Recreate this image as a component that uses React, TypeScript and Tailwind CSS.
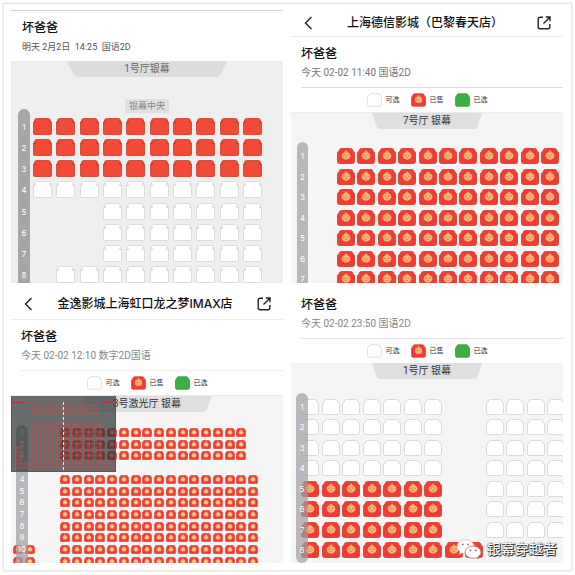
import React from "react";

type Kind = "plain" | "face" | "mini";

const SIZES: Record<Kind, string> = {
  plain: "h-[17px] w-[19px]",
  face: "h-4 w-[18px]",
  mini: "h-[9px] w-[10px]",
};

function SeatArt({ kind, state }: { kind: Kind; state: "sold" | "free" | "picked" }) {
  if (kind === "plain") {
    const sold = state === "sold";
    return (
      <svg viewBox="0 0 19 17" className="block h-full w-full" aria-hidden="true">
        <path
          d="M3.500.5h12q1.200 0 1.600 1l.5 1.700.9.800v11.500q0 1-1 1h-16q-1 0-1-1v-11.500l.9-.8.5-1.700q.4-1 1.600-1z"
          fill={sold ? "#f34a38" : "#ffffff"}
          stroke={sold ? "#d0503f" : "#dcdcdc"}
          strokeWidth="1"
        />
        <path
          d="M.8 4.500h1.400v-2M18.200 4.500h-1.400v-2"
          fill="none"
          stroke={sold ? "#a8392c" : "#c8c8c8"}
          strokeWidth=".8"
        />
      </svg>
    );
  }
  const body =
    "M4.500.5h9q1.800 0 2.200 1.600l.3 1.200q1.500.3 1.500 1.900v8.300q0 2-2 2h-13q-2 0-2-2v-8.300q0-1.600 1.500-1.900l.3-1.200Q2.700.5 4.500.5z";
  if (state !== "sold") {
    const picked = state === "picked";
    return (
      <svg viewBox="0 0 18 16" className="block h-full w-full" aria-hidden="true">
        <path d={body} fill={picked ? "#3bb044" : "#fff"} stroke={picked ? "#379f3f" : "#dadadd"} strokeWidth="1" />
      </svg>
    );
  }
  return (
    <svg viewBox="0 0 18 16" className="block h-full w-full" aria-hidden="true">
      <path d={body} fill="#f03c34" stroke="#e0483e" strokeWidth="1" />
      <circle cx="9" cy="3.900" r="1.500" fill="#f8a468" />
      <ellipse cx="9" cy="7.800" rx="4.400" ry="3.900" fill="#fbb577" />
      {kind === "mini" ? (
        <circle cx="9" cy="7.800" r="1.700" fill="#fbe0b8" />
      ) : (
        <path
          d="M6 7.200h2.300M9.700 7.200h2.300M7.800 9.300q1.200.6 2.400 0"
          fill="none"
          stroke="#d9784a"
          strokeWidth=".8"
        />
      )}
    </svg>
  );
}

/* Row strings: x = sold, o = free, . = aisle */
function Seats({ rows, kind, className }: { rows: string[]; kind: Kind; className: string }) {
  return (
    <div className={`flex shrink-0 flex-col justify-between ${className}`}>
      {rows.map((row, r) => (
        <div key={r} className="flex justify-between">
          {row.split("").map((c, i) =>
            c === "." ? (
              <span key={i} className={SIZES[kind]} />
            ) : (
              <button key={i} type="button" disabled={c === "x"} aria-label={`${r + 1}排${i + 1}座`} className={SIZES[kind]}>
                <SeatArt kind={kind} state={c === "x" ? "sold" : "free"} />
              </button>
            )
          )}
        </div>
      ))}
    </div>
  );
}

function RowBar({ labels, className, cell }: { labels: string[]; className: string; cell: string }) {
  return (
    <div className={`absolute flex flex-col text-center text-[8px] text-white ${className}`}>
      <div className={`flex shrink-0 flex-col justify-between ${cell}`}>
        {labels.map((l, i) => (
          <span key={i} className="block">
            {l || "\u00a0"}
          </span>
        ))}
      </div>
    </div>
  );
}

function Screen({ children, width, tone }: { children: React.ReactNode; width: string; tone: string }) {
  return (
    <div className={`relative mx-auto h-4 shrink-0 ${width}`}>
      <svg viewBox="0 0 120 16" preserveAspectRatio="none" className={`absolute inset-0 h-full w-full ${tone}`} aria-hidden="true">
        <path d="M0 0h120l-4.500 12.500q-1.300 3.500-4 3.500h-103q-2.700 0-4-3.500z" fill="currentColor" />
      </svg>
      <p className="relative whitespace-nowrap text-center font-['Roboto','Noto_Sans_CJK_SC',sans-serif] text-[10px] leading-4">
        {children}
      </p>
    </div>
  );
}

function Header({ title, className }: { title: string; className: string }) {
  return (
    <header className={`flex items-center justify-between border-b border-[#ececec] px-3 ${className}`}>
      <button type="button" aria-label="返回">
        <svg viewBox="0 0 10 14" className="block h-[14px] w-[10px]" fill="none" stroke="#222" strokeWidth="1.400">
          <path d="M8.500 1 2.500 7l6 6" />
        </svg>
      </button>
      <h2 className="whitespace-nowrap text-[12px] leading-4 font-medium text-[#111]">{title}</h2>
      <button type="button" aria-label="分享">
        <svg viewBox="0 0 14 14" className="block h-[14px] w-[14px]" fill="none" stroke="#222" strokeWidth="1.400">
          <path d="M6 1.200H3.200q-2 0-2 2v7.600q0 2 2 2h7.600q2 0 2-2V8M8.800 1h4.200v4.200M12.800 1.200 6.500 7.500" />
        </svg>
      </button>
    </header>
  );
}

function Info({ time, className, tone }: { time: string; className: string; tone: string }) {
  return (
    <div className={`flex flex-col gap-[3px] pt-[9px] pb-[6px] ${className}`}>
      <h3 className="text-[12px] leading-4 font-medium text-[#111]">坏爸爸</h3>
      <p className={`font-['Roboto','Noto_Sans_CJK_SC',sans-serif] leading-4 whitespace-pre ${tone}`}>{time}</p>
    </div>
  );
}

function Legend() {
  const items = [
    ["可选", "free"],
    ["已售", "sold"],
    ["已选", "picked"],
  ] as const;
  return (
    <ul className="flex h-6 items-center justify-center gap-[11px]">
      {items.map(([label, state]) => (
        <li key={label} className="flex items-center gap-1 text-[7px] text-[#333]">
          <span className="h-[14px] w-[15px]">
            <SeatArt kind="face" state={state} />
          </span>
          {label}
        </li>
      ))}
    </ul>
  );
}

function MiniMap() {
  const dots: React.ReactNode[] = [];
  const block = (x0: number, x1: number, y0: number, y1: number, id: string) => {
    for (let y = y0; y < y1; y += 4)
      for (let x = x0; x < x1; x += 4)
        dots.push(<rect key={`${id}${x}-${y}`} x={x} y={y} width="3" height="3" />);
  };
  block(20, 88, 8, 20, "a");
  block(20, 92, 26, 66, "b");
  block(4, 12, 50, 66, "c");
  block(4, 102, 66, 74, "d");
  return (
    <svg viewBox="0 0 105 76" className="absolute top-0 left-0 h-[76px] w-[105px]" aria-hidden="true">
      <rect width="105" height="76" fill="#2c3232" fillOpacity=".7" />
      <g fill="#c8484a" fillOpacity=".55">{dots}</g>
      <path d="M.5 0v75.500h104V0M0 6.500h14M91 6.500h14" fill="none" stroke="#b8303f" strokeWidth="1" />
      <path d="M52.500 6v70" stroke="#e8e8e8" strokeWidth="1" strokeDasharray="3 2" />
    </svg>
  );
}

function Watermark() {
  return (
    <div className="absolute right-[6px] bottom-1 flex items-center gap-[5px]">
      <svg viewBox="0 0 26 20" className="h-5 w-[26px]" aria-hidden="true">
        <path d="M9.500.8C4.600.8 1 3.800 1 7.600c0 2.200 1.200 4 3 5.200l-.8 2.600 3-1.500c1 .3 2 .4 3.300.4 4.700 0 8.500-3 8.500-6.700S14.300.8 9.500.8z" fill="#fff" stroke="#d9b5b0" strokeWidth=".6" />
        <path d="M17 7.200c-4.500 0-8 2.600-8 6s3.500 6 8 6c1 0 2-.1 2.800-.4l2.600 1.200-.6-2.200c1.900-1 3.200-2.700 3.200-4.600 0-3.400-3.500-6-8-6z" fill="#fff" stroke="#a05a55" strokeWidth=".7" />
        <g fill="#b46a64">
          <circle cx="6.800" cy="5.500" r=".9" />
          <circle cx="12" cy="5.500" r=".9" />
          <circle cx="14.500" cy="11.500" r=".9" />
          <circle cx="19.800" cy="11.500" r=".9" />
        </g>
      </svg>
      <span className="text-[14px] leading-5 whitespace-nowrap text-white [text-shadow:1px_1px_0_#333,1px_0_1px_#555,0_1px_1px_#555,-1px_0_1px_#aaa]">
        银幕穿越者
      </span>
    </div>
  );
}

const fill = (n: number, row: string) => Array<string>(n).fill(row);

export default function App() {
  return (
    <div className="overflow-hidden bg-white font-['Inter','Noto_Sans_CJK_SC',sans-serif]">
      <main className="m-[3px] grid grid-cols-2 gap-2 border border-[#e6e6e6] bg-white pt-[6px] pr-2 pb-[7px] pl-[7px] shadow-[0_0_2px_#ddd]">
        <div className="flex min-w-0 flex-col gap-[5px]">
          <section className="border-t border-[#d4d4d4]">
            <Info time="明天 2月2日  14:25  国语2D" className="pl-[11px]" tone="text-[9px] text-[#555]" />
            <div className="relative flex h-[222px] flex-col overflow-hidden bg-[#efefef] text-[#666]">
              <Screen width="w-[160px]" tone="text-[#dcdcdc]">1号厅银幕</Screen>
              <p className="mx-auto mt-[22px] mb-[5px] h-[14px] shrink-0 bg-[#e0e0e0] px-1 text-[9px] leading-[14px] text-[#888]">
                银幕中央
              </p>
              <Seats
                kind="plain"
                className="ml-[22px] h-[165px] w-[229px]"
                rows={[...fill(3, "xxxxxxxxxx"), "oooooooooo", ...fill(3, "...ooooooo"), ".ooooooooo"]}
              />
              <RowBar
                labels={["1", "2", "3", "4", "5", "6", "7", "8"]}
                className="top-12 bottom-0 left-[7px] w-3 rounded-t-full bg-[#a6a6a6] pt-[10px]"
                cell="h-[165px] leading-[17px]"
              />
            </div>
          </section>

          <section>
            <Header title="金逸影城上海虹口龙之梦IMAX店" className="h-8" />
            <Info time="今天 02-02 12:10 数字2D国语" className="ml-[10px] border-b border-[#ececec]" tone="text-[10px] text-[#888]" />
            <Legend />
            <div className="relative flex h-[168px] flex-col overflow-hidden border-t border-[#ececec] bg-[#f5f5f5] text-[#333]">
              <Screen width="w-[130px]" tone="text-[#dfdfdf]">3号激光厅 银幕</Screen>
              <Seats
                kind="mini"
                className="mt-4 ml-[2px] h-[138px] w-[245px]"
                rows={[
                  ...fill(3, "....xxxxxxxxxxxxxxxx."),
                  ".....................",
                  ...fill(6, "....xxxxxxxxxxxxxxxxx"),
                  ...fill(2, "xx..xxxxxxxxxxxxxxxxx"),
                ]}
              />
              <RowBar
                labels={["1", "2", "3", "", "4", "5", "6", "7", "8", "9", "10", ""]}
                className="top-[29px] bottom-0 left-[5px] w-3 rounded-t-full bg-[#9c9ca0]/70 pt-[3px]"
                cell="h-[138px] leading-[9px]"
              />
              <MiniMap />
            </div>
          </section>
        </div>

        <div className="flex min-w-0 flex-col gap-[5px]">
          <section>
            <Header title="上海德信影城（巴黎春天店）" className="h-[27px]" />
            <Info time="今天 02-02 11:40 国语2D" className="ml-[10px] border-b border-[#dcdcdc]" tone="text-[10px] text-[#777]" />
            <Legend />
            <div className="relative flex h-[171px] flex-col overflow-hidden border-t border-[#ececec] bg-[#f5f5f5] text-[#333]">
              <Screen width="w-[110px]" tone="text-[#dfdfdf]">7号厅 银幕</Screen>
              <Seats kind="face" className="mt-[19px] ml-[46px] h-[139px] w-[222px]" rows={fill(7, "xxxxxxxxxxx")} />
              <RowBar
                labels={["1", "2", "3", "4", "5", "6", "7"]}
                className="top-[29px] bottom-0 left-[6px] w-[11px] rounded-t-full bg-[#b8b8bb] pt-[6px]"
                cell="h-[139px] leading-4"
              />
            </div>
          </section>

          <section>
            <Info time="今天 02-02 23:50 国语2D" className="ml-[10px] border-b border-[#e4e4e4]" tone="text-[10px] text-[#888]" />
            <Legend />
            <div className="relative flex h-[200px] flex-col overflow-hidden bg-[#f5f5f5] text-[#333]">
              <Screen width="w-[110px]" tone="text-[#dfdfdf]">1号厅 银幕</Screen>
              <Seats
                kind="face"
                className="mt-5 ml-[10px] h-[159px] w-[264px]"
                rows={[...fill(4, "ooooooo..oooo"), ...fill(3, "xxxxxxx..oooo"), "xxxxxxxxx...."]}
              />
              <RowBar
                labels={["1", "2", "3", "4", "5", "6", "7", "8"]}
                className="top-[30px] bottom-0 left-[5px] w-3 rounded-full bg-[#9c9ca4]/70 pt-[6px]"
                cell="h-[159px] leading-4"
              />
              <Watermark />
            </div>
          </section>
        </div>
      </main>
    </div>
  );
}
